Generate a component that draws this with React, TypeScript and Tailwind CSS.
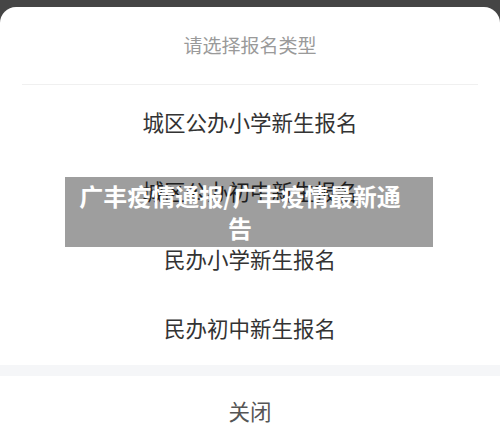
import React from 'react';

const options = ['城区公办小学新生报名', '城区公办初中新生报名', '民办小学新生报名', '民办初中新生报名'];

export default function App() {
    return (
        <div
            className="relative w-[500px] h-[425px] overflow-hidden bg-[#454545]"
            style={{ fontFamily: '"Noto Sans CJK SC", "Noto Sans", sans-serif' }}
        >
            <div className="mt-[7px] bg-white rounded-t-[16px] h-[418px] flex flex-col">
                {/* title */}
                <div className="h-[79px] flex items-center justify-center text-[19px] text-[#9a9a9a]">
                    请选择报名类型
                </div>
                <div className="mx-[22px] h-px bg-[#f0f0f0]" />

                <div className="pt-[3px] flex flex-col">
                    {options.map(o => (
                        <div key={o} className="h-[68.5px] flex items-center justify-center text-[21.5px] text-[#333333]">
                            {o}
                        </div>
                    ))}
                </div>

                <div className="mt-[3px] h-[11px] bg-[#f5f6f8]" />

                <div className="flex-1 flex items-start justify-center pt-[21px] text-[21.5px] leading-[28px] text-[#555555]">
                    关闭
                </div>
            </div>

            {/* watermark title overlay */}
            <div className="absolute left-[65px] top-[177px] w-[368px] h-[70px] bg-[rgba(0,0,0,0.38)] pl-[12px] pr-[30px] py-[3px]">
                <p className="text-center text-white font-bold text-[24px] leading-[32px]">
                    广丰疫情通报/广丰疫情最新通告
                </p>
            </div>
        </div>
    );
}
